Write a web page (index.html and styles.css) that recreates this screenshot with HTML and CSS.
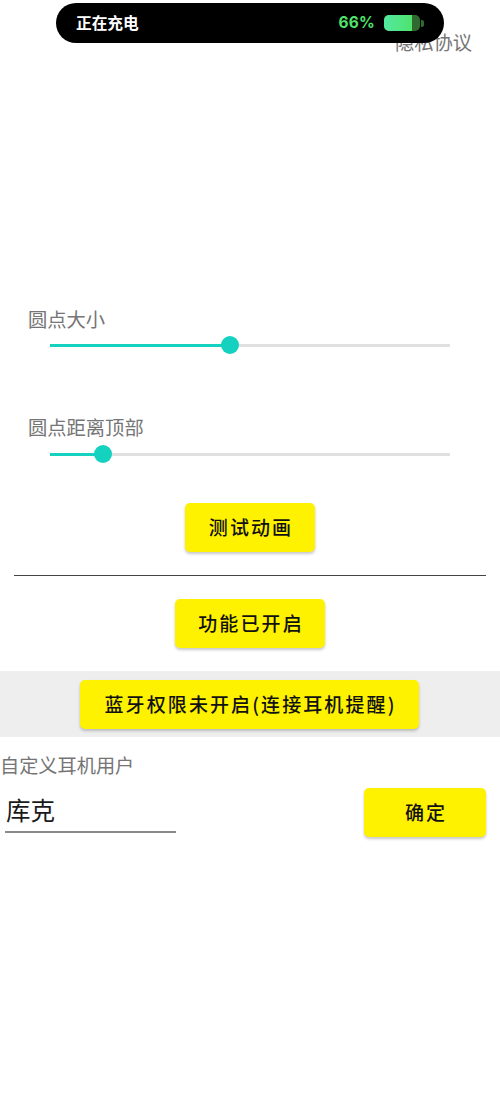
FILE: index.html
```html
<!DOCTYPE html>
<html lang="zh-CN">
<head>
<meta charset="UTF-8">
<meta name="viewport" content="width=device-width,initial-scale=1">
<title>圆点设置</title>
<link rel="stylesheet" href="styles.css">
</head>
<body>

<!-- 充电状态胶囊，盖在页面上 -->
<div class="pill">
  <span class="pill-text">正在充电</span>
  <span class="pill-num">66%</span>
  <span class="battery"><span class="battery-fill"></span></span>
  <span class="battery-tip"></span>
</div>

<div class="privacy">隐私协议</div>

<div class="setting first">
  <div class="label">圆点大小</div>
  <div class="slider"><div class="slider-on size"></div><div class="thumb"></div></div>
</div>

<div class="setting second">
  <div class="label">圆点距离顶部</div>
  <div class="slider"><div class="slider-on top"></div><div class="thumb"></div></div>
</div>

<div class="center test"><button class="btn wide-a">测试动画</button></div>
<div class="line"></div>
<div class="center on"><button class="btn wide-b">功能已开启</button></div>
<div class="band"><button class="btn wide-c">蓝牙权限未开启(连接耳机提醒)</button></div>

<div class="user-label">自定义耳机用户</div>
<div class="user-row">
  <div class="user-input">库克</div>
  <button class="btn wide-d">确定</button>
</div>

</body>
</html>
```

FILE: styles.css
```css
*{box-sizing:border-box;margin:0;padding:0}
body{font:19px/24px "Noto Sans CJK SC","Noto Sans",sans-serif;background:#fff;color:#757575;
     width:500px;height:1111px;overflow:hidden;position:relative}

.pill{position:absolute;left:56px;top:3px;width:388px;height:40px;border-radius:20px;background:#000;
      display:flex;align-items:center;padding-left:20px}
.pill-text{color:#fff;font-size:15.7px;font-weight:700;width:259px}
.pill-num{color:#4fe36e;font:700 15.5px/20px "Inter",sans-serif;letter-spacing:.2px;width:40px;text-align:right}
.battery{width:36px;height:16px;margin-left:9px;border-radius:5px;background:#2f6b2f;overflow:hidden}
.battery-fill{display:block;width:28px;height:16px;background:linear-gradient(90deg,#52e9a0,#4fe36e)}
.battery-tip{width:3px;height:7px;margin-left:1px;border-radius:0 2px 2px 0;background:#2f6b2f}

.privacy{margin-top:30px;padding-right:28px;text-align:right;font-size:19.3px}

.setting{padding-left:28px}
.first{margin-top:254px}
.second{margin-top:61px}
.label{font-size:19.3px;line-height:22px}
.slider{position:relative;width:400px;height:20px;margin:5px 0 0 22px;background:linear-gradient(#e0e0e0,#e0e0e0) center/100% 3px no-repeat}
.second .slider{margin-top:6px}
.slider-on{height:3px;margin-top:8.5px;background:#14d1c0;float:left}
.size{width:180px}
.top{width:53px}
.thumb{width:18px;height:18px;margin-top:1px;border-radius:50%;background:#14d1c0;float:left;margin-left:-9px}

.btn{height:49px;padding:0 0 2px 2px;border:none;border-radius:5px;background:#fff200;color:#111;font:500 19px/47px "Noto Sans CJK SC",sans-serif;
     letter-spacing:2.1px;box-shadow:0 2px 3px rgba(0,0,0,.22)}
.center{display:flex;justify-content:center}
.test{margin-top:39px}
.wide-a{width:130px}
.wide-b{width:150px}
.wide-c{width:339px;margin-right:1px}
.wide-d{width:122px}

.line{height:1px;margin:23px 14px 0;background:#444}
.on{margin-top:23px}
.band{height:66px;margin-top:23px;padding-top:9px;background:#eeeeee;display:flex;justify-content:center;align-items:flex-start}

.user-label{margin-top:16px;font-size:19.2px}
.user-row{display:flex;justify-content:space-between;align-items:flex-start;margin-top:11px;padding:0 14px 0 5px}
.user-input{width:171px;height:45px;padding-left:1px;color:#1a1a1a;font-size:24.5px;line-height:44px;border-bottom:2px solid #8a8a8a}
```
